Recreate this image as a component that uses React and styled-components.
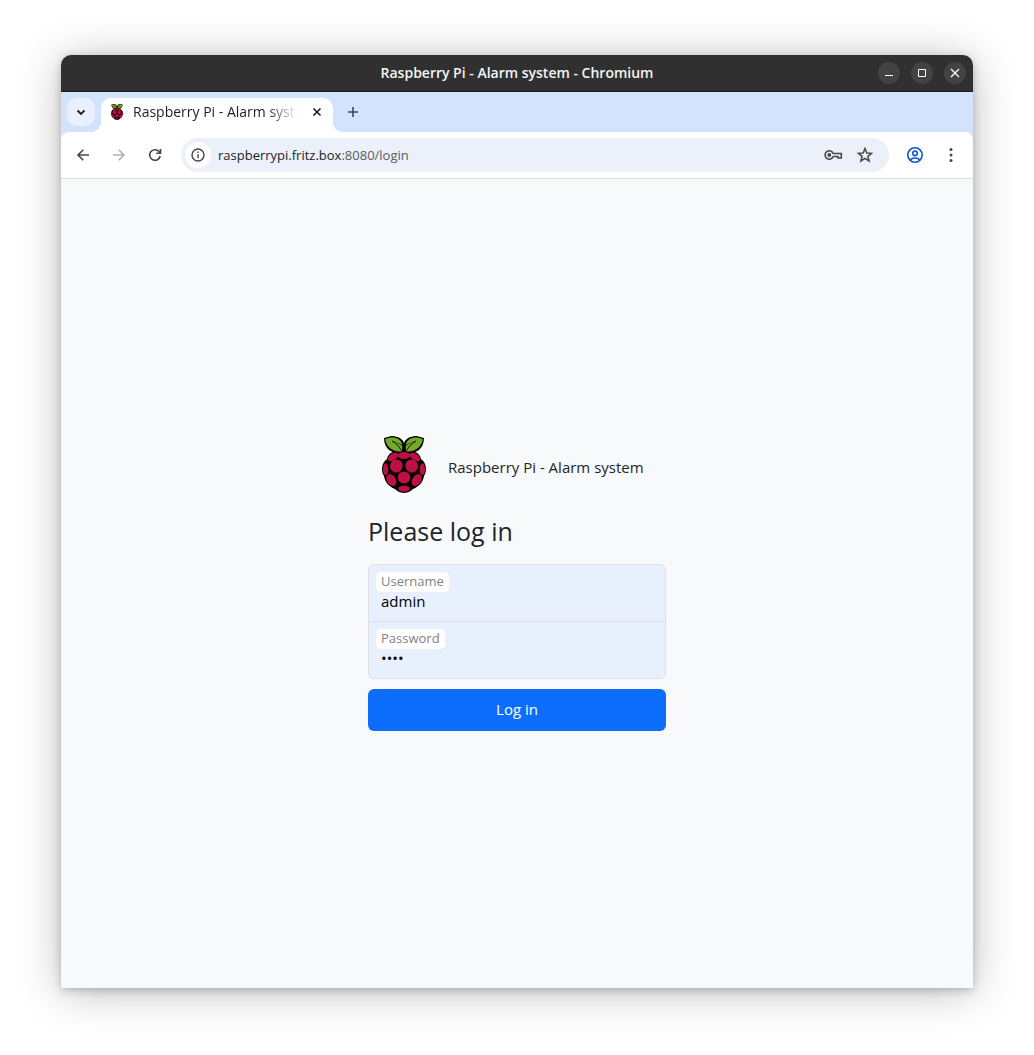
import React from "react";
import styled, { createGlobalStyle } from "styled-components";

const Global = createGlobalStyle`
  *, *::before, *::after { box-sizing: border-box; }
  body { margin: 0; background: #fff; color: #212529; font-family: "Open Sans", "Noto Sans", sans-serif; }
  button, input { font-family: inherit; }
`;

const Desktop = styled.div`
  min-height: 100vh;
  display: flex;
  padding: 55px 61px 67px;
`;

const Window = styled.div`
  flex: 1;
  min-width: 0;
  display: flex;
  flex-direction: column;
  border-radius: 10px 10px 0 0;
  background: #f8f9fb;
  overflow: hidden;
  box-shadow: 0 2px 8px rgba(0, 0, 0, 0.22), 0 4px 44px rgba(0, 0, 0, 0.26);
`;

const TitleBar = styled.header`
  height: 37px;
  display: grid;
  grid-template-columns: 1fr auto 1fr;
  align-items: center;
  padding: 0 7px;
  background: #303030;
  border-bottom: 1px solid #1c1c1c;
`;

const WindowTitle = styled.div`
  grid-column: 2;
  font-size: 14px;
  line-height: 20px;
  font-weight: 600;
  color: #f4f4f4;
`;

const WindowControls = styled.div`
  display: flex;
  justify-content: flex-end;
  gap: 11px;
`;

const IconButton = styled.button`
  display: inline-flex;
  align-items: center;
  justify-content: center;
  flex: none;
  width: ${(p) => p.$size || 28}px;
  height: ${(p) => p.$size || 28}px;
  padding: 0;
  border: 0;
  border-radius: ${(p) => p.$radius || "50%"};
  background: ${(p) => p.$bg || "transparent"};
  color: ${(p) => p.$color || "#474747"};
`;

const TabStrip = styled.div`
  height: 40px;
  display: flex;
  align-items: center;
  padding: 0 6px;
  background: #d3e3fd;
`;

const Tab = styled.div`
  position: relative;
  align-self: flex-end;
  width: 232px;
  height: 34px;
  margin: 0 6px;
  padding: 0 8px 6px;
  display: flex;
  align-items: center;
  gap: 8px;
  background: #fff;
  border-radius: 10px 10px 0 0;

  &::before, &::after {
    content: "";
    position: absolute;
    bottom: 0;
    width: 10px;
    height: 10px;
  }
  &::before {
    right: 100%;
    background: radial-gradient(circle at 0 0, transparent 10px, #fff 10px);
  }
  &::after {
    left: 100%;
    background: radial-gradient(circle at 100% 0, transparent 10px, #fff 10px);
  }
`;

const TabTitle = styled.span`
  flex: 1;
  min-width: 0;
  overflow: hidden;
  white-space: nowrap;
  font-size: 14px;
  line-height: 20px;
  color: #1f1f1f;
  mask-image: linear-gradient(to right, #000 80%, transparent 98%);
`;

const ToolbarBack = styled.div`
  background: #d3e3fd;
`;

const Toolbar = styled.div`
  height: 47px;
  display: flex;
  align-items: center;
  padding: 0 8px;
  gap: 8px;
  background: #fff;
  border-bottom: 1px solid #dcdddf;
  border-radius: 8px 8px 0 0;
`;

const AddressBar = styled.div`
  flex: 1;
  min-width: 0;
  height: 34px;
  display: flex;
  align-items: center;
  gap: 4px;
  margin: 0 4px;
  padding: 0 10px 0 4px;
  border-radius: 17px;
  background: #ebf0f9;
`;

const Url = styled.div`
  flex: 1;
  min-width: 0;
  padding-left: 3px;
  font-size: 13px;
  line-height: 20px;
  color: #1f1f1f;
`;

const UrlRest = styled.span`
  color: #5a5d61;
`;

const Page = styled.main`
  flex: 1;
  display: flex;
  align-items: center;
  justify-content: center;
  padding: 16px;
`;

const LoginForm = styled.form`
  width: 298px;
  display: flex;
  flex-direction: column;
`;

const Brand = styled.div`
  display: flex;
  align-items: center;
  gap: 8px;
`;

const BrandName = styled.span`
  padding-top: 4px;
  font-size: 15px;
  line-height: 24px;
  white-space: nowrap;
`;

const Heading = styled.h1`
  margin: 21px 0 16px;
  font-size: 25px;
  line-height: 34px;
  font-weight: 400;
`;

const Fields = styled.div`
  border: 1px solid #dee2e6;
  border-radius: 6px;
  background: #e8f0fe;
  overflow: hidden;
`;

const Field = styled.div`
  height: 56px;
  display: flex;
  flex-direction: column;
  align-items: flex-start;
  padding: 7px;

  & + & {
    height: 57px;
    border-top: 1px solid #dee2e6;
  }
`;

const FieldLabel = styled.label`
  padding: 0 5px 2px;
  border-radius: 5px;
  background: #fff;
  font-size: 13px;
  line-height: 18px;
  color: #808386;
`;

const FieldInput = styled.input`
  width: 100%;
  height: 18px;
  padding: 0 5px;
  border: 0;
  outline: 0;
  background: transparent;
  font-size: 15px;
  line-height: 18px;
  color: #000;
`;

const Submit = styled.button`
  height: 42px;
  margin-top: 10px;
  padding: 0 0 2px;
  border: 0;
  border-radius: 6px;
  background: #0d6efd;
  color: #fff;
  font-size: 15px;
  line-height: 24px;
`;

function Icon({ size = 20, box = 20, width = 1.6, children }) {
  return (
    <svg width={size} height={size} viewBox={`0 0 ${box} ${box}`} fill="none" stroke="currentColor" strokeWidth={width} aria-hidden="true">
      {children}
    </svg>
  );
}

function Raspberry({ width, height, viewBox }) {
  return (
    <svg width={width} height={height} viewBox={viewBox} aria-hidden="true">
      <path d="M22 14 C14 14 6 16 5 23 C-1 27 -1 36 2 40 C3 47 8 51 13 53 C16 56 20 57 22 57 C24 57 28 56 31 53 C36 51 41 47 42 40 C45 36 45 27 39 23 C38 16 30 14 22 14Z" fill="#000" />
      <path d="M21 18 C10 18 2 13 2 2 C5 1 7 1 9 0 C13 0 20 1 22 7 C24 1 31 0 35 0 C37 1 39 1 42 2 C42 13 34 18 23 18Z" fill="#000" />
      <g fill="#75a928">
        <path d="M19 15.500 C10 16 4 10 3.200 3 C10 0 19 1 20.300 9 C18 8 14 6 10 5 C15 8 18 11 19 15.500Z" />
        <path d="M19 15.500 C17 11 14 8 10 5 C14 6 18 8 20.300 10 C20.500 13 20 15 19 15.500Z" />
        <path d="M25 15.500 C34 16 40 10 40.800 3 C34 0 25 1 23.700 9 C26 8 30 6 34 5 C29 8 26 11 25 15.500Z" />
        <path d="M25 15.500 C27 11 30 8 34 5 C30 6 26 8 23.700 10 C23.500 13 24 15 25 15.500Z" />
      </g>
      <g fill="none" stroke="#000" strokeWidth="0.9">
        <path d="M10 5 C14 7 17 10 19 14" />
        <path d="M34 5 C30 7 27 10 25 14" />
      </g>
      <g fill="#bc1142">
        <ellipse cx="22" cy="19.500" rx="6.400" ry="3.500" />
        <ellipse cx="11" cy="21" rx="5.800" ry="3.300" transform="rotate(-36 11 21)" />
        <ellipse cx="33" cy="21" rx="5.800" ry="3.300" transform="rotate(36 33 21)" />
        <ellipse cx="14.300" cy="30" rx="6.300" ry="6.500" transform="rotate(30 14.300 30)" />
        <ellipse cx="29.700" cy="30" rx="6.300" ry="6.500" transform="rotate(-30 29.700 30)" />
        <ellipse cx="3.600" cy="33.300" rx="2.600" ry="6" />
        <ellipse cx="40.400" cy="33.300" rx="2.600" ry="6" />
        <ellipse cx="22" cy="41.500" rx="6.300" ry="5.900" />
        <ellipse cx="9.300" cy="44" rx="4.400" ry="6.500" transform="rotate(-32 9.300 44)" />
        <ellipse cx="34.700" cy="44" rx="4.400" ry="6.500" transform="rotate(32 34.700 44)" />
        <ellipse cx="22" cy="52.700" rx="5.800" ry="3" />
      </g>
    </svg>
  );
}

export default function App() {
  return (
    <>
      <Global />
      <Desktop>
        <Window>
          <TitleBar>
            <WindowTitle>Raspberry Pi - Alarm system - Chromium</WindowTitle>
            <WindowControls>
              <IconButton $size={22} $bg="#434343" $color="#fff" aria-label="Minimize">
                <Icon size={10} box={10} width={1}><path d="M1 7.500H9" /></Icon>
              </IconButton>
              <IconButton $size={22} $bg="#434343" $color="#fff" aria-label="Maximize">
                <Icon size={10} box={10} width={1}><path d="M1.500 1.500H8.500V8.500H1.500Z" /></Icon>
              </IconButton>
              <IconButton $size={22} $bg="#434343" $color="#fff" aria-label="Close window">
                <Icon size={10} box={10} width={1.3}><path d="M1 1L9 9M9 1L1 9" /></Icon>
              </IconButton>
            </WindowControls>
          </TitleBar>
          <TabStrip>
            <IconButton $radius="10px" $bg="#e9f1fe" $color="#1f1f1f" aria-label="Search tabs">
              <Icon size={16} box={16} width={1.8}><path d="M4.500 6.500L8 10L11.500 6.500" /></Icon>
            </IconButton>
            <Tab>
              <Raspberry width={16} height={16} viewBox="-6.500 0 57 57" />
              <TabTitle>Raspberry Pi - Alarm system</TabTitle>
              <IconButton $size={16} $color="#1f1f1f" aria-label="Close tab">
                <Icon size={16} box={16} width={1.7}><path d="M4.500 4.500L11.500 11.500M11.500 4.500L4.500 11.500" /></Icon>
              </IconButton>
            </Tab>
            <IconButton aria-label="New tab">
              <Icon size={16} box={16} width={1.6}><path d="M8 3V13M3 8H13" /></Icon>
            </IconButton>
          </TabStrip>
          <ToolbarBack>
            <Toolbar>
              <IconButton aria-label="Back">
                <Icon><path d="M16 10H5M10.300 4.700L5 10L10.300 15.300" /></Icon>
              </IconButton>
              <IconButton $color="#b0b0b0" aria-label="Forward">
                <Icon><path d="M4 10H15M9.700 4.700L15 10L9.700 15.300" /></Icon>
              </IconButton>
              <IconButton aria-label="Reload">
                <Icon><path d="M15.200 11A5.300 5.300 0 1 1 14 6.500L15 7.500M15.500 4V8.200H11.300" /></Icon>
              </IconButton>
              <AddressBar>
                <IconButton $size={26} $bg="#fff" aria-label="Site information">
                  <Icon size={16} box={16} width={1.4}><circle cx="8" cy="8" r="6" /><path d="M8 7.200V11.200M8 4.600V6" /></Icon>
                </IconButton>
                <Url>raspberrypi.fritz.box<UrlRest>:8080/login</UrlRest></Url>
                <IconButton aria-label="Saved passwords">
                  <Icon>
                    <path d="M10.200 8.500H18.300V13H15V11.500H10.200A4.200 4.200 0 1 1 10.200 8.500Z" />
                    <circle cx="6.300" cy="10" r="1.900" fill="currentColor" stroke="none" />
                  </Icon>
                </IconButton>
                <IconButton aria-label="Bookmark this page">
                  <Icon width={1.5}><path d="M10 3.500L11.800 8L16.500 8.300L12.900 11.300L14.100 16L10 13.400L5.900 16L7.100 11.300L3.500 8.300L8.200 8Z" /></Icon>
                </IconButton>
              </AddressBar>
              <IconButton $color="#0b57d0" aria-label="Profile">
                <Icon><circle cx="10" cy="10" r="7.200" /><circle cx="10" cy="8.300" r="2.300" /><path d="M5 15C7.500 12.300 12.500 12.300 15 15" /></Icon>
              </IconButton>
              <IconButton aria-label="Menu">
                <Icon><g fill="currentColor" stroke="none"><circle cx="10" cy="4.500" r="1.500" /><circle cx="10" cy="10" r="1.500" /><circle cx="10" cy="15.500" r="1.500" /></g></Icon>
              </IconButton>
            </Toolbar>
          </ToolbarBack>
          <Page>
            <LoginForm onSubmit={(e) => e.preventDefault()}>
              <Brand>
                <Raspberry width={72} height={57} viewBox="-14 0 72 57" />
                <BrandName>Raspberry Pi - Alarm system</BrandName>
              </Brand>
              <Heading>Please log in</Heading>
              <Fields>
                <Field>
                  <FieldLabel htmlFor="username">Username</FieldLabel>
                  <FieldInput id="username" type="text" defaultValue="admin" />
                </Field>
                <Field>
                  <FieldLabel htmlFor="password">Password</FieldLabel>
                  <FieldInput id="password" type="password" defaultValue="abcd" />
                </Field>
              </Fields>
              <Submit type="submit">Log in</Submit>
            </LoginForm>
          </Page>
        </Window>
      </Desktop>
    </>
  );
}
